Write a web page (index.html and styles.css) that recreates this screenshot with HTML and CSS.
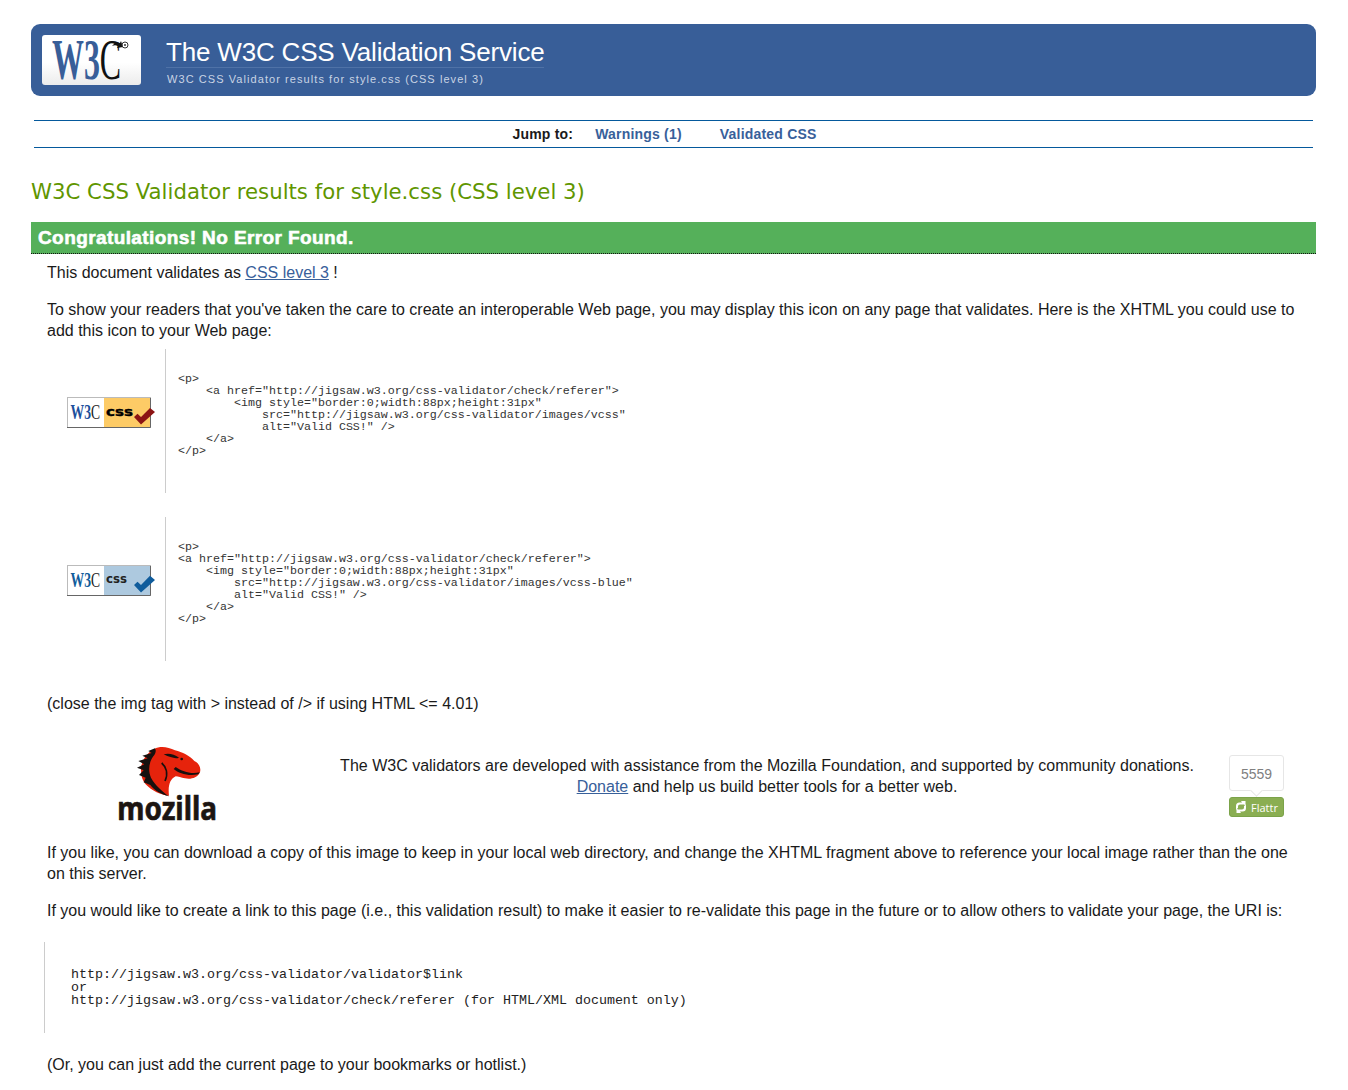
FILE: index.html
```html
<!DOCTYPE html>
<html lang="en">
<head>
<meta charset="utf-8">
<title>W3C CSS Validator results for style.css (CSS level 3)</title>
<link rel="stylesheet" href="styles.css">
</head>
<body>
<header class="banner">
  <div class="logo-box">
    <svg class="w3c-logo" width="99" height="50" viewBox="0 0 99 50">
      <text class="w3c-word" transform="translate(10 44) scale(.57 1)">W3<tspan class="w3c-c">C</tspan></text>
      <path d="M70 11c2-3 5-4 8-3l1-2 2 6-6 1 1-2c-2-1-4-1-6 0z" fill="#111"/>
      <circle cx="83" cy="10" r="3" fill="none" stroke="#333" stroke-width="1"/>
      <circle cx="83" cy="10" r="1" fill="#333"/>
    </svg>
  </div>
  <div class="banner-text">
    <h1 class="banner-title">The W3C CSS Validation Service</h1>
    <p class="banner-sub">W3C CSS Validator results for style.css (CSS level 3)</p>
  </div>
</header>

<nav class="jump">
  <span class="jump-label">Jump to:</span>
  <a class="jump-link" href="#warnings">Warnings (1)</a>
  <a class="jump-link" href="#css">Validated CSS</a>
</nav>

<h2 class="page-title">W3C CSS Validator results for style.css (CSS level 3)</h2>

<h3 class="congrats">Congratulations! No Error Found.</h3>

<div class="content">
  <p class="first">This document validates as <a href="#">CSS level 3</a> !</p>
  <p class="para-show">To show your readers that you've taken the care to create an interoperable Web page, you may display this icon on any page that validates. Here is the XHTML you could use to add this icon to your Web page:</p>

  <div class="badge-row">
    <div class="badge-cell">
      <svg class="badge" width="90" height="33" viewBox="0 0 90 33">
        <rect x="0.500" y="0.500" width="83" height="30" fill="#fff" stroke="#bbb"/>
        <rect x="37" y="1" width="46" height="29" fill="#fdcb66"/>
        <path d="M0 30.500H83.500V1" fill="none" stroke="#666"/>
        <text class="badge-w3 yellow-w3" transform="translate(3.500 22) scale(.62 1)">W3<tspan class="badge-c">C</tspan></text>
        <text class="badge-css-wide" x="39" y="18.500" textLength="27" lengthAdjust="spacingAndGlyphs">css</text>
        <path d="M67 20l3.500-3.300L74 20l9-9 5 4-14 12.500z" fill="#8c1414"/>
      </svg>
    </div>
    <pre class="code">&lt;p&gt;
    &lt;a href="http://jigsaw.w3.org/css-validator/check/referer"&gt;
        &lt;img style="border:0;width:88px;height:31px"
            src="http://jigsaw.w3.org/css-validator/images/vcss"
            alt="Valid CSS!" /&gt;
    &lt;/a&gt;
&lt;/p&gt;</pre>
  </div>

  <div class="badge-row">
    <div class="badge-cell">
      <svg class="badge" width="90" height="33" viewBox="0 0 90 33">
        <rect x="0.500" y="0.500" width="83" height="30" fill="#fff" stroke="#bbb"/>
        <rect x="37" y="1" width="46" height="29" fill="#adc9df"/>
        <path d="M0 30.500H83.500V1" fill="none" stroke="#666"/>
        <text class="badge-w3 blue-w3" transform="translate(3.500 22) scale(.62 1)">W3<tspan class="badge-c">C</tspan></text>
        <text class="badge-css" x="39" y="18" textLength="21" lengthAdjust="spacingAndGlyphs">css</text>
        <path d="M67 20l3.500-3.300L74 20l9-9.300 5 4.300-14 12.500z" fill="#0f5c9c"/>
      </svg>
    </div>
    <pre class="code">&lt;p&gt;
&lt;a href="http://jigsaw.w3.org/css-validator/check/referer"&gt;
    &lt;img style="border:0;width:88px;height:31px"
        src="http://jigsaw.w3.org/css-validator/images/vcss-blue"
        alt="Valid CSS!" /&gt;
    &lt;/a&gt;
&lt;/p&gt;</pre>
  </div>

  <p class="para-close">(close the img tag with &gt; instead of /&gt; if using HTML &lt;= 4.01)</p>

  <div class="sponsor">
    <svg class="mozilla" width="125" height="95" viewBox="0 0 375 285">
      <path d="M148 42C165 32 190 36 210 46C232 52 254 62 268 78C282 84 290 100 284 114C276 128 258 134 240 130C228 128 220 124 212 124C196 132 188 150 192 182C168 180 140 168 122 148C108 132 108 112 108 96C114 70 128 52 148 42Z" fill="#e6230c"/>
      <path d="M150 40L130 48L140 54L112 62L128 70L100 78L118 88L96 98L116 106L102 120L122 128L116 142L136 150C148 166 168 178 192 184C170 168 150 150 138 128C128 106 132 78 148 60C152 54 154 46 150 40Z" fill="#17100e"/>
      <path d="M176 58C192 54 208 58 222 68C212 72 196 68 176 58Z" fill="#17100e"/>
      <path d="M206 102C222 116 250 124 280 118L284 112C258 118 232 110 212 96Z" fill="#17100e"/>
      <path d="M170 84C184 96 190 116 180 138" fill="none" stroke="#17100e" stroke-width="5"/>
      <circle cx="230" cy="72" r="4" fill="#17100e"/>
      <text class="mozilla-word" x="37" y="255" textLength="299" lengthAdjust="spacingAndGlyphs">mozilla</text>
    </svg>
    <p class="sponsor-text">The W3C validators are developed with assistance from the Mozilla Foundation, and supported by community donations.<br><a href="#">Donate</a> and help us build better tools for a better web.</p>
    <div class="flattr">
      <div class="flattr-count">5559</div>
      <div class="flattr-btn">
        <svg width="12" height="12" viewBox="0 0 12 12"><path d="M1 8.500V5a3.500 3.500 0 0 1 3.500-3.500H7L6 0h4.500v4.500L9 3.500H5A2 2 0 0 0 3 5.500V7zM11 3.500V7a3.500 3.500 0 0 1-3.500 3.500H5l1 1.500H1.500V7.500L3 8.500h4a2 2 0 0 0 2-2V5z" fill="#fff"/></svg>
        <span>Flattr</span>
      </div>
    </div>
  </div>

  <p class="para-copy">If you like, you can download a copy of this image to keep in your local web directory, and change the XHTML fragment above to reference your local image rather than the one on this server.</p>
  <p class="para-link">If you would like to create a link to this page (i.e., this validation result) to make it easier to re-validate this page in the future or to allow others to validate your page, the URI is:</p>
  <pre class="uri">http://jigsaw.w3.org/css-validator/validator$link
or
http://jigsaw.w3.org/css-validator/check/referer (for HTML/XML document only)</pre>
  <p class="para-last">(Or, you can just add the current page to your bookmarks or hotlist.)</p>
</div>
</body>
</html>
```
FILE: styles.css
```css
* { box-sizing: border-box; }
html { background: #fff; }
body {
  margin: 0;
  padding: 24px 32px 0 31px;
  height: 1090px;
  overflow: hidden;
  font-family: "Liberation Sans", Arial, sans-serif;
  font-size: 16px;
  line-height: 21px;
  color: #1a1a1a;
  background: #fff;
}
a { color: #38609a; }

.banner {
  display: flex;
  align-items: flex-start;
  height: 72px;
  background: #385e98;
  border-radius: 9px;
  padding: 11px 0 0 11px;
}
.logo-box {
  width: 99px;
  height: 50px;
  border-radius: 3px;
  background: linear-gradient(#fff 55%, #ececec);
}
.w3c-logo { display: block; overflow: visible; }
.w3c-word {
  font-family: "Liberation Serif", serif;
  font-size: 56px;
  font-weight: bold;
  fill: #385e98;
}
.w3c-c { fill: #111; font-weight: normal; }
.banner-text { margin-left: 25px; width: 378px; }
.banner-title {
  margin: 0;
  font-size: 26px;
  font-weight: normal;
  line-height: 31px;
  padding-top: 2px;
  height: 33px;
  color: #fff;
  white-space: nowrap;
  letter-spacing: -0.18px;
  border-bottom: 1px solid #4f72a7;
}
.banner-sub {
  margin: 3px 0 0 1px;
  font-size: 11px;
  line-height: 16px;
  letter-spacing: 1.07px;
  color: #c9d4e4;
  white-space: nowrap;
}

.jump {
  display: flex;
  justify-content: center;
  align-items: center;
  height: 28px;
  margin: 24px 3px 0;
  border-top: 1px solid #05599c;
  border-bottom: 1px solid #05599c;
  font-size: 14px;
  font-weight: bold;
  letter-spacing: 0.2px;
  padding-right: 18px;
}
.jump-label { color: #1a1a1a; margin-right: 22px; }
.jump-link { color: #38609a; text-decoration: none; margin-right: 38px; }
.jump-link:last-child { margin-right: 0; }

.page-title {
  margin: 28px 0 0;
  font-family: "DejaVu Sans", Verdana, sans-serif;
  font-size: 21.250px;
  line-height: 32px;
  font-weight: normal;
  color: #5f9600;
  white-space: nowrap;
}

.congrats {
  margin: 14px 0 0;
  height: 32px;
  padding-left: 7px;
  background: #55b05a;
  border-bottom: 1px dotted #111;
  font-family: "Liberation Sans", Arial, sans-serif;
  font-size: 19px;
  font-weight: bold;
  letter-spacing: 0.4px;
  -webkit-text-stroke: 0.6px #fff;
  line-height: 32px;
  color: #fff;
}

.content { padding: 0 16px; }
.content p { margin: 0; }
.content .first { margin-top: 8px; }
.content .para-show { margin-top: 16px; }

.badge-row {
  display: flex;
  align-items: flex-start;
  margin-top: 8px;
  height: 144px;
}
.badge-row + .badge-row { margin-top: 24px; }
.badge-cell {
  width: 119px;
  height: 144px;
  padding: 48px 0 0 20px;
  border-right: 1px solid #ccc;
}
.badge { display: block; overflow: visible; }
.badge-w3 {
  font-family: "Liberation Serif", serif;
  font-size: 22px;
  font-weight: bold;
}
.yellow-w3 { fill: #1c4f9c; }
.blue-w3 { fill: #115d9c; }
.badge-c { fill: #222; font-weight: normal; }
.badge-css-wide {
  font-family: "DejaVu Sans", sans-serif;
  font-size: 12px;
  font-weight: bold;
  stroke: #000;
  stroke-width: 0.4px;
  fill: #000;
}
.badge-css { font-family: "DejaVu Sans", sans-serif; font-size: 13px; font-weight: bold; fill: #222; }
.code {
  margin: 0;
  padding: 24px 0 0 12px;
  font-family: "Liberation Mono", monospace;
  font-size: 11.670px;
  line-height: 12px;
  color: #333;
}
.content .para-close { margin-top: 32px; }

.sponsor {
  display: flex;
  align-items: flex-start;
  height: 107px;
  margin-top: 21px;
}
.mozilla { margin-left: 58px; flex: none; overflow: visible; }
.mozilla-word {
  font-family: "Noto Sans", sans-serif;
  font-size: 96px;
  font-weight: bold;
  stroke: #1c1512;
  stroke-width: 2px;
  fill: #1c1512;
}
.sponsor-text {
  width: 878px;
  margin: 0 0 0 98px !important;
  padding-top: 20px;
  text-align: center;
  flex: none;
}
.flattr {
  margin-left: 23px;
  width: 55px;
  padding-top: 20px;
  flex: none;
}
.flattr-count {
  position: relative;
  height: 36px;
  border: 1px solid #e6e6e6;
  border-radius: 3px;
  text-align: center;
  font-size: 14px;
  line-height: 36px;
  color: #808080;
}
.flattr-count::after {
  content: "";
  position: absolute;
  left: 22px;
  bottom: -5px;
  width: 8px;
  height: 8px;
  background: #fff;
  border-right: 1px solid #e6e6e6;
  border-bottom: 1px solid #e6e6e6;
  transform: rotate(45deg);
}
.flattr-btn {
  display: flex;
  align-items: center;
  gap: 4px;
  height: 20px;
  margin-top: 6px;
  padding-left: 5px;
  background: #8aae52;
  border: 1px solid #7ba349;
  border-radius: 3px;
  font-family: "Open Sans", sans-serif;
  font-size: 11px;
  color: #fff;
}
.content .para-copy { margin-top: 0; }
.content .para-link { margin-top: 16px; }
.uri {
  margin: 21px 0 0 -3px;
  height: 91px;
  padding: 26px 0 0 26px;
  border-left: 1px solid #ccc;
  font-family: "Liberation Mono", monospace;
  font-size: 13.330px;
  line-height: 13px;
  color: #222;
}
.content .para-last { margin-top: 21px; }
```
